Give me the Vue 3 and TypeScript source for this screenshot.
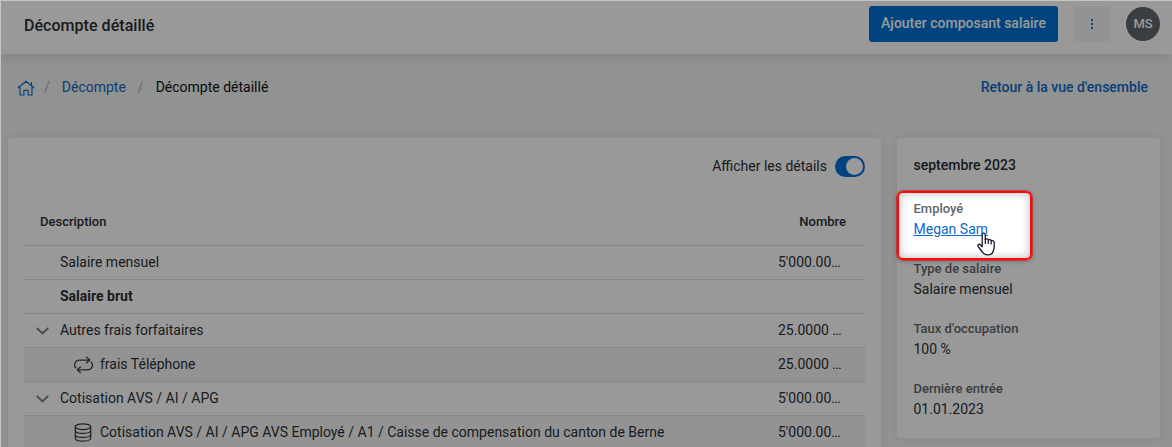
<script setup lang="ts">
interface Row {
  label: string
  amount: string
  kind: 'plain' | 'total' | 'group' | 'repeat' | 'stack'
}

const rows: Row[] = [
  { label: 'Salaire mensuel', amount: "5'000.00…", kind: 'plain' },
  { label: 'Salaire brut', amount: '', kind: 'total' },
  { label: 'Autres frais forfaitaires', amount: '25.0000 …', kind: 'group' },
  { label: 'frais Téléphone', amount: '25.0000 …', kind: 'repeat' },
  { label: 'Cotisation AVS / AI / APG', amount: "5'000.00…", kind: 'group' },
  {
    label: 'Cotisation AVS / AI / APG AVS Employé / A1 / Caisse de compensation du canton de Berne',
    amount: "5'000.00…",
    kind: 'stack',
  },
]

const facts = [
  { name: 'Employé', value: 'Megan Sam', link: true },
  { name: 'Type de salaire', value: 'Salaire mensuel', link: false },
  { name: "Taux d'occupation", value: '100 %', link: false },
  { name: 'Dernière entrée', value: '01.01.2023', link: false },
]
</script>

<template>
  <div class="page">
    <header class="topbar">
      <h1>Décompte détaillé</h1>
      <button class="primary">Ajouter composant salaire</button>
      <button class="more" aria-label="Plus">
        <svg width="4" height="12" viewBox="0 0 4 12"><path d="M1 1h2v2H1zM1 5h2v2H1zM1 9h2v2H1z" fill="#0070d2" /></svg>
      </button>
      <div class="avatar">MS</div>
    </header>

    <nav class="crumbs">
      <svg class="home" width="18" height="16" viewBox="0 0 18 16" fill="none" stroke="#0070d2" stroke-width="1.15">
        <path d="M.8 8 9 1.200l8.200 6.800M3 6.700v8.300h3.900v-4.700h4.200v4.700H15V6.700M14.400 2v3" />
      </svg>
      <span class="slash first">/</span>
      <a class="crumb">Décompte</a>
      <span class="slash second">/</span>
      <span>Décompte détaillé</span>
      <a class="back">Retour à la vue d'ensemble</a>
    </nav>

    <main class="content">
      <section class="card table-card">
        <div class="toggle-line">
          <span>Afficher les détails</span>
          <span class="switch"><span class="knob"></span></span>
        </div>
        <div class="head"><span>Description</span><span>Nombre</span></div>
        <div v-for="row in rows" :key="row.label" class="row" :class="row.kind">
          <span class="gutter">
            <svg v-if="row.kind === 'group'" width="13" height="8" viewBox="0 0 13 8" fill="none" stroke="#7b8085" stroke-width="1.900">
              <path d="m.8 1 5.700 5.500L12.200 1" />
            </svg>
          </span>
          <span v-if="row.kind === 'repeat'" class="icon">
            <svg width="19" height="18" viewBox="0 0 19 18" fill="none" stroke="#3a3d42" stroke-width="1.250">
              <path d="M2.300 12.300C.4 10.900.4 8.300 1.100 6.800 1.900 5 3.500 4 5.500 4h10.200M12.200 .8 15.700 4l-3.500 3.200M16.700 5.700c1.900 1.400 1.900 4 1.200 5.500-.8 1.800-2.400 2.600-4.400 2.600H3.300M6.800 10.600l-3.500 3.200 3.500 3.200" />
            </svg>
          </span>
          <span v-if="row.kind === 'stack'" class="icon">
            <svg width="18" height="19" viewBox="0 0 18 19" fill="none" stroke="#34373c" stroke-width="1.200">
              <ellipse cx="9" cy="3.700" rx="7.700" ry="2.900" />
              <path d="M1.300 3.700v11.500c0 1.600 3.400 2.900 7.700 2.900s7.700-1.300 7.700-2.900V3.700M1.300 7.500c0 1.600 3.400 2.900 7.700 2.900s7.700-1.300 7.700-2.900M1.300 11.400c0 1.600 3.400 2.900 7.700 2.900s7.700-1.300 7.700-2.900" />
            </svg>
          </span>
          <span class="label">{{ row.label }}</span>
          <span class="amount">{{ row.amount }}</span>
        </div>
      </section>

      <aside class="card side">
        <h2>septembre 2023</h2>
        <dl v-for="fact in facts" :key="fact.name">
          <dt>{{ fact.name }}</dt>
          <dd :class="{ link: fact.link }">{{ fact.value }}</dd>
        </dl>
      </aside>
    </main>

    <div class="spotlight"></div>
    <div class="edge"></div>
    <svg class="cursor" width="19" height="25" viewBox="0 0 19 25">
      <path
        d="M5.200 13V3c0-2.500 3.100-2.500 3.100 0v4.500c.7-1 2.800-.8 3 .5.8-.8 2.700-.5 2.900.8 1-.7 3 0 3 1.600v5.200c0 1.500-.5 2.500-1.200 3.900-.5 1.800-2.100 3.300-4.700 3.300h-1c-2.600 0-4-1-5-2.800L1.200 14.500c-.9-1.600 1-3 2.300-1.700l1.700 2z"
        fill="#fff" stroke="#17172b" stroke-width="1.300" stroke-linejoin="round"
      />
      <path d="M8.300 7v5M11.300 8v4M14.200 9v3.500" stroke="#17172b" stroke-width="1.200" fill="none" />
    </svg>
  </div>
</template>

<style>
body { overflow: hidden; }
</style>

<style scoped>
* { box-sizing: border-box; }
.page {
  position: relative;
  width: 1172px;
  height: 447px;
  overflow: hidden;
  background: #f2f3f3;
  color: #2b2f34;
  font: 14px/20px Roboto, "Liberation Sans", sans-serif;
}
.topbar {
  display: flex;
  align-items: flex-start;
  height: 54px;
  padding: 6px 12px 0 24px;
  background: #fff;
  box-shadow: 0 1px 14px rgba(40, 50, 60, .13);
}
h1 { flex: 1; margin: 10px 0 0; font-size: 16px; line-height: 20px; font-weight: 500; letter-spacing: .04px; }
button { border: 0; border-radius: 3px; height: 36px; padding: 0; font: inherit; }
.primary { width: 189px; padding-bottom: 2px; background: #0070d2; color: #fff; font-weight: 500; }
.more { display: flex; align-items: center; justify-content: center; width: 36px; margin: 0 16px; background: #f5f5f6; }
.avatar {
  width: 34px;
  height: 34px;
  margin-top: 1px;
  border-radius: 50%;
  background: #61666f;
  color: #fff;
  text-align: center;
  font-size: 13px;
  line-height: 34px;
  font-weight: 500;
}
.crumbs { display: flex; align-items: center; height: 20px; margin: 23px 24px 41px 17px; color: #101214; }
.home { margin-top: 1px; }
.slash { color: #adb5bd; }
.slash.first { margin: 0 12px 0 9px; }
.slash.second { margin: 0 12px; }
.crumb, .back { color: #1068c7; }
.back { margin-left: auto; font-weight: 500; }
.content { display: flex; align-items: flex-start; gap: 16px; padding-left: 8px; }
.card { background: #fff; border-radius: 3px; box-shadow: 0 0 10px rgba(40, 50, 60, .07); }
.table-card { width: 873px; height: 330px; padding: 16px 16px 0; }
.toggle-line { display: flex; align-items: center; justify-content: flex-end; gap: 8px; height: 24px; }
.switch { width: 30px; height: 21px; padding: 2px; border-radius: 11px; background: #0070d2; }
.knob { display: block; width: 17px; height: 17px; margin-left: 9px; border-radius: 50%; background: #fff; }
.head {
  display: flex;
  justify-content: space-between;
  height: 68px;
  padding: 34px 19px 0 16px;
  border-bottom: 1px solid #dfe1e3;
  font-size: 13px;
  font-weight: 500;
}
.row { display: flex; align-items: center; height: 34px; padding-bottom: 1px; border-bottom: 1px solid #dfe1e3; }
.gutter { display: flex; justify-content: center; width: 36px; padding-top: 2px; }
.total .label { font-weight: 700; }
.repeat, .stack { background: #f6f6f7; }
.icon { display: flex; justify-content: center; width: 20px; margin: 0 7px 0 13px; padding-top: 1px; }
.label { flex: 1; white-space: nowrap; }
.amount { width: 87px; }
.side { width: 263px; height: 300px; padding: 17px 16px 0 16.5px; }
h2 { margin: 0 0 24px; font-size: 14px; line-height: 20px; font-weight: 500; }
dl { margin: 0 0 20px; }
dt { color: #61666b; font-size: 13px; font-weight: 500; line-height: 20px; }
dd { margin: 0; line-height: 20px; }
.link { color: #1068c7; text-decoration: underline; }
.spotlight {
  position: absolute;
  left: 897px;
  top: 191px;
  width: 135px;
  height: 69px;
  border: 2px solid #ff0808;
  border-radius: 6px;
  box-shadow: inset 0 0 7px 2px rgba(0, 0, 0, .19), 0 0 0 .6px #e01010, 0 1px 5px rgba(0, 0, 0, .3), 0 0 0 1200px rgba(0, 0, 0, .4);
}
.edge { position: absolute; inset: 0; border-top: 1px solid #c4c5c5; border-left: 1px solid #c4c5c5; }
.cursor { position: absolute; left: 977px; top: 232px; }
</style>
